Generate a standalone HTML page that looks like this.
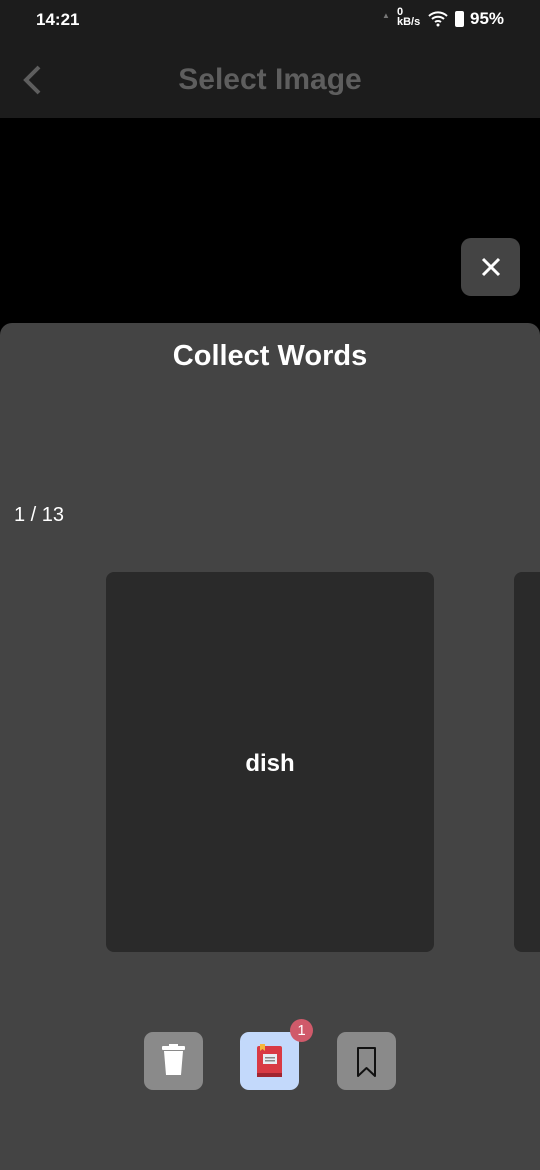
<!DOCTYPE html>
<html><head><meta charset="utf-8"><style>
*{margin:0;padding:0;box-sizing:border-box}
body{width:540px;height:1170px;background:#000;position:relative;overflow:hidden;font-family:"Liberation Sans",Roboto,sans-serif;color:#fff}
.hdr{position:absolute;left:0;top:0;width:540px;height:118px;background:#1c1c1c}
.time{position:absolute;left:36px;top:10px;font-size:17px;font-weight:bold}
.title{position:absolute;left:0;width:540px;top:63px;text-align:center;font-size:30px;font-weight:bold;color:#5e5e5e}
.close{position:absolute;left:461px;top:238px;width:59px;height:58px;background:#444;border-radius:10px}
.sheet{position:absolute;left:0;top:323px;width:540px;height:847px;background:#444;border-radius:12px 12px 0 0}
.h2{position:absolute;top:340px;width:540px;text-align:center;font-size:29px;font-weight:bold}
.cnt{position:absolute;left:14px;top:504px;font-size:20px}
.card{position:absolute;top:572px;height:380px;background:#2a2a2a;border-radius:8px}
.word{position:absolute;left:106px;width:328px;top:750px;text-align:center;font-size:24px;font-weight:bold}
.btn{position:absolute;top:1032px;width:59px;height:58px;border-radius:9px;background:#8a8a8a}
</style></head><body>
<div class="hdr"></div>
<div class="time">14:21</div>
<div style="position:absolute;left:382px;top:11px;font-size:8px;color:#777">▲<br></div>
<div style="position:absolute;left:397px;top:7px;font-size:11px;font-weight:bold;line-height:10px">0<br>kB/s</div>
<svg style="position:absolute;left:428px;top:11px" width="20" height="16" viewBox="0 0 20 16"><path d="M1 5a13 13 0 0 1 18 0M4 8a9 9 0 0 1 12 0M7 11a5 5 0 0 1 6 0" stroke="#fff" stroke-width="2" fill="none"/><circle cx="10" cy="14" r="1.5" fill="#fff"/></svg>
<div style="position:absolute;left:455px;top:11px;width:9px;height:16px;background:#fff;border-radius:2px"></div>
<div style="position:absolute;left:470px;top:9px;font-size:17px;font-weight:bold">95%</div>
<svg style="position:absolute;left:20px;top:64px" width="24" height="32" viewBox="0 0 24 32"><path d="M19 3L6 16l13 13" stroke="#5e5e5e" stroke-width="4" fill="none"/></svg>
<div class="title">Select Image</div>
<div class="close"><svg width="59" height="58" viewBox="0 0 59 58"><path d="M22 21l16 16M38 21L22 37" stroke="#fff" stroke-width="3"/></svg></div>
<div class="sheet"></div>
<div class="h2">Collect Words</div>
<div class="cnt">1 / 13</div>
<div class="card" style="left:106px;width:328px"></div>
<div class="card" style="left:514px;width:40px"></div>
<div class="word">dish</div>
<div class="btn" style="left:144px"><svg width="59" height="58" viewBox="0 0 59 58"><rect x="18" y="14" width="23" height="4" rx="1" fill="#fff"/><rect x="25" y="12" width="9" height="3" fill="#fff"/><path d="M20 19h19l-2 24h-15z" fill="#fff"/></svg></div>
<div class="btn" style="left:240px;background:#c3d9fb"><svg width="59" height="58" viewBox="0 0 59 58"><rect x="17" y="14" width="25" height="31" rx="2" fill="#d93a44"/><rect x="17" y="41" width="25" height="4" fill="#a02530"/><rect x="23" y="22" width="14" height="10" fill="#e8eef4"/><rect x="25" y="25" width="10" height="1.5" fill="#888"/><rect x="25" y="28" width="10" height="1.5" fill="#888"/><path d="M20 12h5v7l-2.5-2-2.5 2z" fill="#f6b73c"/></svg></div>
<div style="position:absolute;left:290px;top:1019px;width:23px;height:23px;border-radius:50%;background:#d05a6a;font-size:15px;text-align:center;line-height:23px">1</div>
<div class="btn" style="left:337px"><svg width="59" height="58" viewBox="0 0 59 58"><path d="M21 16h17v28l-8.5-8-8.5 8z" stroke="#111" stroke-width="2" fill="none" stroke-linejoin="round"/></svg></div>
</body></html>
